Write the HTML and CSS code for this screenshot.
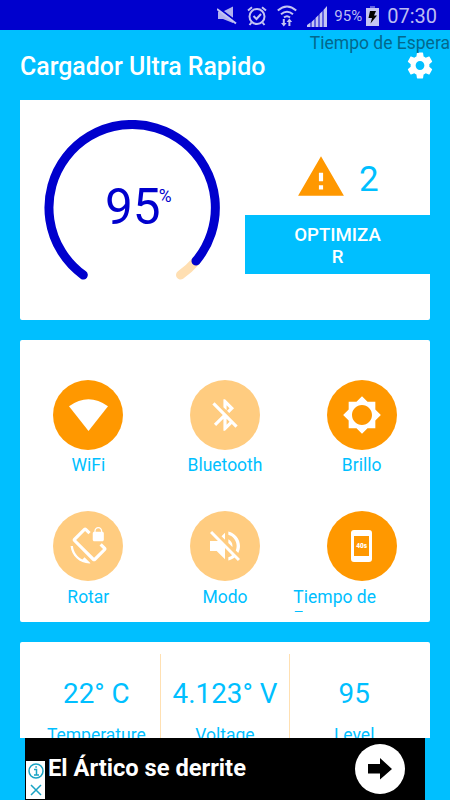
FILE: index.html
```html
<!DOCTYPE html>
<html lang="es">
<head>
<meta charset="UTF-8">
<title>Cargador Ultra Rapido</title>
<link rel="stylesheet" href="styles.css">
</head>
<body>
	<div class="screen">
		<div class="status">
			<svg width="20" height="20" viewBox="0 0 20 20"><path d="M1 5.500h5l10-5v16.500L6 13H1z" opacity=".9"/><path class="cut" d="M0 1l20 15"/><path class="line" d="M0 3l19 14.500"/></svg>
			<svg width="20" height="20" viewBox="0 0 20 20"><circle class="line" cx="10" cy="10.500" r="7.500"/><path class="line" d="M6.500 10l3 3 4.500-5M1 4.500l4-3.200M19 4.500l-4-3.200M4.500 16.500l-2 2.500M15.500 16.500l2 2.500"/></svg>
			<svg width="20" height="22" viewBox="0 0 20 22"><path class="line" d="M.8 5.500Q10-2.500 19.200 5.500M4 9.200q6-5 12 0M7 12.500q3-2.500 6 0"/><path d="M6.800 21.500L4 18h1.800v-4h2v4h1.800zM12.400 13.500L15.200 17h-1.800v4h-2v-4H9.600z"/></svg>
			<svg width="20" height="21" viewBox="0 0 20 21"><path d="M0 21v-2l3.500-2.500V21zM4.500 21v-5l3-3V21zM8.500 21v-9l3-3V21zM12.500 21V8l3-3V21zM16.500 21V4L20 0v21z"/></svg>
			<span class="percent">95%</span>
			<svg class="battery" width="13" height="20" viewBox="0 0 13 20"><path opacity=".5" d="M4 0h5v2H4z"/><path d="M0 2h13v18H0z"/><path fill="#000" d="M4 5h6L8 9.500h3L4.500 17.500 6 12H2.500z"/></svg>
			<span class="time">07:30</span>
		</div>

		<div class="header">
			<h1>Cargador Ultra Rapido</h1>
			<svg class="gear" width="30" height="31" viewBox="0 0 24 24" preserveAspectRatio="none"><path d="M19.430 12.980c.04-.32.07-.64.07-.98s-.03-.66-.07-.98l2.110-1.650c.19-.15.24-.42.12-.64l-2-3.460c-.12-.22-.39-.3-.61-.22l-2.490 1c-.52-.4-1.080-.73-1.690-.98l-.38-2.650C14.460 2.180 14.250 2 14 2h-4c-.25 0-.46.18-.49.42l-.38 2.650c-.61.25-1.170.59-1.690.98l-2.490-1c-.23-.09-.49 0-.61.22l-2 3.460c-.13.22-.07.49.12.64l2.110 1.650c-.04.32-.07.65-.07.98s.03.66.07.98l-2.110 1.650c-.19.15-.24.42-.12.64l2 3.460c.12.22.39.3.61.22l2.490-1c.52.4 1.080.73 1.690.98l.38 2.650c.03.24.24.42.49.42h4c.25 0 .46-.18.49-.42l.38-2.650c.61-.25 1.170-.59 1.690-.98l2.490 1c.23.09.49 0 .61-.22l2-3.460c.12-.22.07-.49-.12-.64l-2.110-1.650zM12 15.500c-1.930 0-3.500-1.570-3.500-3.500s1.570-3.500 3.500-3.500 3.500 1.570 3.500 3.500-1.570 3.500-3.500 3.500z"/></svg>
			<span class="toast">Tiempo de Espera</span>
		</div>

		<div class="card charge">
			<div class="gauge">
				<svg width="176" height="176" viewBox="0 0 176 176">
					<path class="rest" d="M152 141A83.200 83.200 0 0 1 136.500 155"/>
					<path class="done" d="M39.300 155A83.200 83.200 0 1 1 152 141"/>
				</svg>
				<div class="value">95<sup>%</sup></div>
			</div>
			<div class="optimize">
				<div class="issues">
					<svg width="50" height="50" viewBox="0 0 24 24"><path d="M1 21h22L12 2 1 21zm12-3h-2v-2h2v2zm0-4h-2v-4h2v4z"/></svg>
					<span>2</span>
				</div>
				<div class="button">OPTIMIZA<br>R</div>
			</div>
		</div>

		<div class="card toggles">
			<div class="toggle">
				<div class="dot on"><svg width="70" height="70" viewBox="0 0 70 70"><path d="M16 26.300Q35.500 12.300 55 26.300L35.500 51z"/></svg></div>
				<div class="label">WiFi</div>
			</div>
			<div class="toggle">
				<div class="dot"><svg width="38" height="38" viewBox="0 0 24 24"><path d="M13 5.830l1.880 1.880-1.600 1.600 1.410 1.410 3.020-3.020L12 2h-1v5.030l2 2v-3.200zM5.410 4L4 5.410 10.590 12 5 17.590 6.410 19 11 14.410V22h1l4.290-4.290 2.300 2.290L20 18.590 5.410 4zM13 18.170v-3.760l1.880 1.880L13 18.170z"/></svg></div>
				<div class="label">Bluetooth</div>
			</div>
			<div class="toggle">
				<div class="dot on"><svg width="40" height="40" viewBox="0 0 24 24"><path d="M20 15.310L23.310 12 20 8.690V4h-4.690L12 .69 8.690 4H4v4.690L.69 12 4 15.310V20h4.690L12 23.310 15.310 20H20v-4.690zM12 18c-3.310 0-6-2.690-6-6s2.690-6 6-6 6 2.690 6 6-2.690 6-6 6z"/></svg></div>
				<div class="label">Brillo</div>
			</div>
			<div class="toggle">
				<div class="dot"><svg width="38" height="38" viewBox="0 0 24 24"><path d="M23.250 12.770l-2.570-2.570-1.410 1.410 2.220 2.220-5.660 5.660L4.510 8.170l5.660-5.660 2.100 2.100 1.410-1.410L11.230.75c-.59-.59-1.540-.59-2.120 0L2.750 7.110c-.59.59-.59 1.540 0 2.120l12.020 12.020c.59.59 1.540.59 2.120 0l6.360-6.360c.59-.59.59-1.540 0-2.120zM8.470 20.480C5.200 18.940 2.860 15.760 2.500 12H1c.51 6.160 5.660 11 11.950 11l.66-.03-3.810-3.820-1.330 1.330zM16 9h5c.55 0 1-.45 1-1V4c0-.55-.45-1-1-1v-.5C21 1.120 19.880 0 18.500 0S16 1.120 16 2.500V3c-.55 0-1 .45-1 1v4c0 .55.45 1 1 1zm.8-6.500c0-.94.76-1.700 1.700-1.700s1.700.76 1.700 1.700V3h-3.400v-.5z"/></svg></div>
				<div class="label">Rotar</div>
			</div>
			<div class="toggle">
				<div class="dot"><svg width="40" height="40" viewBox="0 0 24 24"><path d="M16.500 12c0-1.770-1.020-3.290-2.500-4.030v2.210l2.450 2.450c.03-.2.05-.41.05-.63zm2.500 0c0 .94-.2 1.820-.54 2.640l1.510 1.510C20.630 14.910 21 13.500 21 12c0-4.280-2.990-7.860-7-8.770v2.060c2.890.86 5 3.540 5 6.710zM4.270 3L3 4.270 7.730 9H3v6h4l5 5v-6.730l4.250 4.250c-.67.52-1.420.93-2.250 1.180v2.060c1.380-.31 2.630-.95 3.690-1.810L19.730 21 21 19.730l-9-9L4.270 3zM12 4L9.910 6.090 12 8.180V4z"/></svg></div>
				<div class="label">Modo</div>
			</div>
			<div class="toggle">
				<div class="dot on"><div class="phone">40s</div></div>
				<div class="label wrap">Tiempo de<br>Espera</div>
			</div>
		</div>

		<div class="card stats">
			<div class="stat"><b>22° C</b><span>Temperature</span></div>
			<div class="stat"><b>4.123° V</b><span>Voltage</span></div>
			<div class="stat"><b>95</b><span>Level</span></div>
		</div>

		<div class="ad">
			<div class="choices">
				<svg width="16" height="16" viewBox="0 0 16 16"><circle cx="8" cy="8" r="7"/><path d="M6 6.500h2.500V12M6 12h5" /><path d="M7.300 4h1.600"/></svg>
				<svg width="16" height="16" viewBox="0 0 16 16"><path d="M3 3l10 10M13 3L3 13"/></svg>
			</div>
			<div class="headline">El Ártico se derrite</div>
			<div class="go"><svg width="24" height="22" viewBox="0 0 24 22"><path d="M0 6h12V0l12 11-12 10.500V15.500H0z"/></svg></div>
		</div>
	</div>
</body>
</html>
```
FILE: styles.css
```css
body{
	margin: 0;
	background: #00bfff;
	font-family: Roboto, sans-serif;
}
svg{ display: block; flex: none; }
.screen{
	width: 450px; height: 800px;
	overflow: hidden;
	background: #00bfff;
	display: flex;
	flex-direction: column;
}

.status{
	height: 30px;
	box-sizing: border-box;
	padding: 2px 13px 0 0;
	background: #0000cd;
	color: #bcbcf1;
	fill: #c4c4f3;
	display: flex;
	flex: none;
	align-items: center;
	justify-content: flex-end;
	gap: 10px;
}
.status .line{ fill: none; stroke: #c4c4f3; stroke-width: 2; }
.status .cut{ fill: none; stroke: #0000cd; stroke-width: 2; }
.percent{ font-size: 15px; margin: 0 -6px 0 -3px; }
.time{ font-size: 20px; margin-left: -2px; }

.header{
	position: relative;
	height: 70px;
	flex: none;
	box-sizing: border-box;
	padding: 0 15px 0 20px;
	display: flex;
	align-items: center;
	justify-content: space-between;
}
h1{
	margin: 2px 0 0;
	font-size: 24.900px;
	font-weight: 500;
	color: #fff;
}
.gear{ fill: #fff; }
.toast{
	position: absolute;
	top: 3px; right: 0;
	font-size: 17.500px;
	line-height: 21px;
	color: #03688d;
	white-space: nowrap;
}

.card{
	margin: 0 20px 20px;
	background: #fff;
	border-radius: 2px;
	flex: none;
	overflow: hidden;
}
.charge{
	height: 220px;
	display: flex;
	border-radius: 0 0 2px 2px;
}
.gauge{
	width: 225px;
	box-sizing: border-box;
	padding: 19.500px 0 0 24.300px;
	display: grid;
	align-content: start;
}
.gauge svg, .value{ grid-area: 1 / 1; }
.gauge path{
	fill: none;
	stroke-width: 9;
	stroke-linecap: round;
}
.gauge .rest{ stroke: #ffdfb2; }
.gauge .done{ stroke: #0000cd; }
.value{
	padding: 58.500px 0 0 60.700px;
	font-size: 49.500px;
	line-height: 59px;
	color: #0000cd;
	display: flex;
}
.value sup{
	font-size: 17.500px;
	line-height: 20px;
	padding-top: 8px;
	margin-left: -2px;
}
.optimize{
	width: 185px;
	padding-top: 52px;
}
.issues{
	height: 63px;
	padding-left: 51px;
	display: flex;
	gap: 13px;
	fill: #ff9800;
	font-size: 35px;
	line-height: 56px;
	color: #00bfff;
}
.button{
	height: 59px;
	box-sizing: border-box;
	padding-top: 9px;
	background: #00bfff;
	color: #fff;
	font-size: 18.600px;
	font-weight: 500;
	line-height: 22px;
	text-align: center;
}

.toggles{
	height: 282px;
	box-sizing: border-box;
	padding-top: 40px;
	display: grid;
	grid-template-columns: repeat(3, 1fr);
	grid-template-rows: 131.300px 131.300px;
}
.dot{
	width: 70px; height: 70px;
	margin: 0 auto;
	border-radius: 50%;
	background: #ffcc80;
	display: flex;
	align-items: center;
	justify-content: center;
	fill: #fff;
}
.dot.on{ background: #ff9800; }
.label{
	height: 25px;
	margin-top: 5.300px;
	overflow: hidden;
	font-size: 17.500px;
	line-height: 21px;
	color: #00bfff;
	text-align: center;
}
.label.wrap{ text-align: left; }
.phone{
	width: 21px; height: 32px;
	box-sizing: border-box;
	border: solid #fff;
	border-width: 6px 3px;
	border-radius: 3px;
	color: #fff;
	font-size: 6.500px;
	font-weight: 900;
	line-height: 20px;
	display: flex;
	justify-content: center;
}

.stats{
	height: 96px;
	box-sizing: border-box;
	margin-bottom: 0;
	padding: 12px 11.500px 0 12.500px;
	border-radius: 2px 2px 0 0;
	display: grid;
	grid-template-columns: repeat(3, 1fr);
}
.stat{
	height: 84px;
	overflow: hidden;
	box-sizing: border-box;
	padding-top: 21px;
	color: #00bfff;
	text-align: center;
}
.stat:not(:last-child){ border-right: 1px solid #ffe0b2; }
.stat b{
	display: block;
	font-size: 27.800px;
	font-weight: 400;
	line-height: 38px;
	white-space: nowrap;
}
.stat span{
	display: block;
	margin-top: 12px;
	font-size: 17.500px;
	line-height: 21px;
}

.ad{
	width: 400px; height: 62px;
	margin: 0 auto;
	background: #000;
	flex: none;
	display: flex;
}
.choices{
	width: 19px; height: 38px;
	margin: 23px 0 0 1px;
	background: #fff;
	display: flex;
	flex-direction: column;
	align-items: center;
	justify-content: space-around;
}
.choices svg{ fill: none; stroke: #1aa3c4; stroke-width: 1.500; }
.headline{
	flex: 1;
	padding-left: 3px;
	font-size: 23.700px;
	font-weight: 700;
	line-height: 61px;
	color: #fff;
}
.go{
	width: 50px; height: 50px;
	margin: 6px 20px 0 0;
	border-radius: 50%;
	background: #fff;
	display: flex;
	align-items: center;
	justify-content: center;
}
```
